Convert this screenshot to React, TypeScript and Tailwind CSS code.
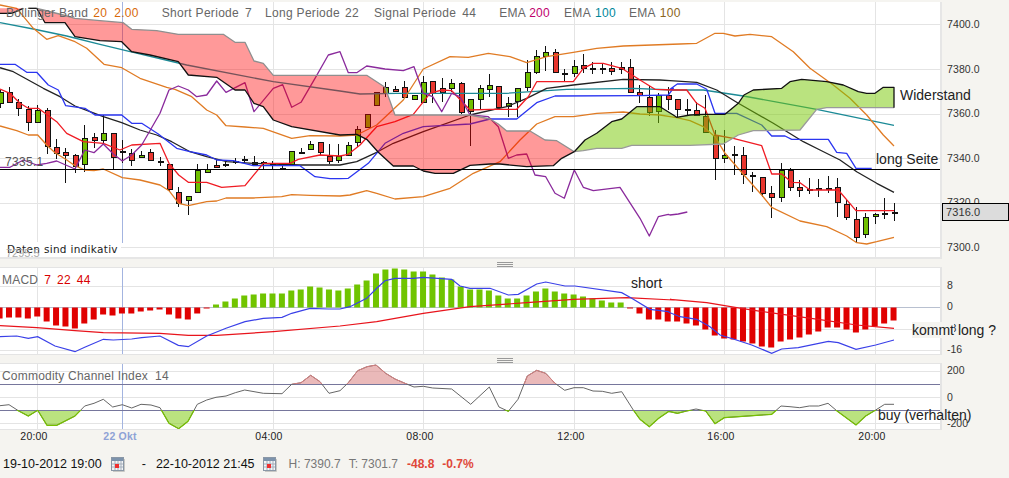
import React from 'react';

// candles: high, body top, body bottom, low, colour (g/r). first one is cut off at the left edge
const candles: [number, number, number, number, string][] = [
  [90, 92, 103, 108, 'g'], [87, 92, 102, 102, 'r'], [99, 102, 108, 116, 'r'], [106, 109, 122, 131, 'r'],
  [105, 110, 122, 122, 'g'], [108, 110, 146, 154, 'r'], [139, 147, 153, 159, 'r'], [148, 152, 155, 183, 'r'],
  [154, 155, 166, 173, 'r'], [125, 138, 164, 172, 'g'], [133, 137, 140, 148, 'r'], [115, 133, 140, 145, 'g'],
  [133, 133, 157, 169, 'r'], [140, 151, 152, 163, 'r'], [149, 153, 160, 166, 'r'], [151, 155, 157, 157, 'g'],
  [149, 152, 160, 160, 'r'], [157, 161, 162, 166, 'r'], [164, 164, 189, 192, 'r'], [187, 192, 203, 207, 'r'],
  [196, 196, 200, 215, 'g'], [164, 170, 192, 192, 'g'], [164, 169, 172, 172, 'g'], [159, 165, 167, 167, 'r'],
  [160, 164, 165, 167, 'r'], [158, 161, 162, 164, 'r'], [156, 159, 159, 163, 'r'], [156, 162, 164, 165, 'r'],
  [161, 162, 163, 170, 'r'], [161, 164, 165, 169, 'r'], [163, 168, 169, 169, 'r'], [151, 151, 165, 165, 'g'],
  [148, 152, 153, 153, 'r'], [141, 144, 149, 149, 'g'], [142, 142, 152, 155, 'r'], [144, 156, 161, 164, 'r'],
  [144, 156, 160, 163, 'g'], [142, 145, 155, 155, 'g'], [126, 129, 142, 147, 'g'], [114, 114, 127, 127, 'g'],
  [92, 92, 105, 105, 'g'], [82, 87, 93, 97, 'g'], [86, 89, 91, 91, 'r'], [81, 87, 97, 97, 'r'],
  [95, 95, 99, 99, 'g'], [76, 82, 102, 103, 'g'], [81, 81, 93, 103, 'r'], [78, 88, 92, 102, 'r'],
  [79, 83, 88, 92, 'g'], [82, 83, 112, 114, 'r'], [99, 99, 111, 146, 'g'], [85, 88, 99, 110, 'g'],
  [74, 85, 89, 97, 'g'], [86, 86, 107, 107, 'r'], [97, 103, 106, 117, 'g'], [88, 88, 101, 117, 'g'],
  [60, 72, 87, 91, 'g'], [50, 56, 72, 74, 'g'], [46, 52, 56, 71, 'g'], [49, 52, 72, 72, 'r'],
  [69, 73, 73, 82, 'r'], [60, 66, 73, 77, 'g'], [54, 65, 68, 73, 'r'], [62, 68, 69, 74, 'r'],
  [63, 68, 69, 74, 'r'], [62, 68, 71, 75, 'r'], [62, 67, 69, 74, 'r'], [59, 67, 92, 92, 'r'],
  [85, 92, 95, 103, 'r'], [86, 97, 112, 116, 'r'], [93, 95, 111, 123, 'g'], [87, 95, 99, 110, 'r'],
  [99, 99, 109, 118, 'r'], [99, 109, 110, 115, 'r'], [102, 110, 115, 115, 'r'], [95, 116, 132, 132, 'r'],
  [130, 135, 158, 180, 'r'], [130, 155, 158, 163, 'g'], [146, 154, 154, 175, 'r'], [147, 155, 174, 184, 'r'],
  [172, 175, 176, 192, 'r'], [177, 177, 193, 197, 'r'], [186, 193, 197, 218, 'r'], [163, 170, 197, 202, 'g'],
  [168, 170, 187, 191, 'r'], [180, 187, 190, 197, 'r'], [178, 189, 190, 194, 'r'], [179, 188, 189, 197, 'r'],
  [176, 188, 189, 193, 'r'], [178, 187, 202, 217, 'r'], [200, 204, 217, 220, 'r'], [207, 219, 237, 243, 'r'],
  [213, 217, 234, 238, 'g'], [213, 214, 216, 224, 'g'], [198, 213, 214, 219, 'r'], [203, 212, 212, 221, 'r'],
];

// macd histogram, first bar is at the left edge as well
const macdBars = [
  -11, -10, -10, -11, -9, -14, -18, -19, -21, -16, -12, -7, -8, -6, -6, -4, -3, -2, -7, -11, -12, -6, -1, 3, 6, 9, 12,
  13, 14, 14, 14, 17, 18, 21, 20, 18, 17, 19, 23, 27, 34, 38, 39, 38, 36, 36, 33, 30, 28, 21, 18, 18, 17, 12, 9, 9, 12,
  16, 19, 16, 14, 13, 11, 9, 7, 5, 5, -1, -6, -12, -12, -14, -14, -16, -18, -22, -28, -31, -32, -34, -36, -39, -40,
  -34, -32, -30, -27, -24, -20, -20, -22, -25, -22, -19, -16, -13,
];

const cx = (i: number) => 9 + 9.41 * i;

// points below were read off the 3x crops, so they are kept in crop coordinates
const seg = (ox: number, oy: number, a: number[]) => {
  const out: string[] = [];
  for (let i = 0; i < a.length; i += 2) {
    out.push(`${(ox + a[i] / 3).toFixed(1)},${(oy + a[i + 1] / 3).toFixed(1)}`);
  }
  return out.join(' ');
};

const upperBand = [
  seg(0, 0, [0, 15, 50, 25, 100, 85, 140, 118, 175, 107, 225, 125, 260, 145, 312, 193, 365, 203, 420, 235, 500, 262, 525, 268, 575, 290, 620, 330, 650, 345, 678, 377, 735, 381, 790, 385, 875, 415, 930, 407, 1020, 408]),
  seg(340, 0, [50, 405, 110, 375, 190, 300, 250, 207, 330, 170, 385, 172, 445, 160, 510, 170, 560, 188, 620, 170, 700, 157, 770, 145, 850, 138, 1020, 132]),
  seg(670, 0, [80, 130, 135, 100, 160, 100, 195, 108, 240, 103, 305, 110, 370, 155, 420, 205, 490, 255, 540, 295, 590, 345, 640, 405, 672, 438]),
].join(' ');

const lowerBand = [
  seg(0, 0, [0, 378, 50, 392, 85, 405, 113, 405, 140, 435, 165, 458, 197, 478, 225, 497, 254, 510, 282, 512, 310, 507, 367, 533, 420, 540, 480, 555, 507, 572, 536, 610, 565, 617, 620, 605, 650, 603, 678, 594, 760, 594, 845, 590, 875, 584, 930, 586, 1020, 588]),
  seg(340, 0, [30, 585, 80, 572, 110, 580, 165, 597, 250, 590, 330, 565, 400, 520, 480, 485, 540, 420, 590, 372, 645, 350, 700, 350, 770, 340, 850, 336, 900, 342, 960, 345, 990, 350]),
  seg(670, 0, [20, 353, 60, 362, 100, 380, 135, 410, 165, 460, 220, 523, 275, 585, 305, 622, 390, 663, 470, 680, 530, 708, 560, 728, 590, 732, 620, 725, 672, 712]),
].join(' ');

const midBand = [
  seg(0, 0, [0, 203, 40, 215, 85, 240, 130, 265, 180, 290, 225, 318, 270, 335, 310, 350, 365, 368, 420, 390, 470, 405, 515, 425, 570, 455, 620, 470, 680, 485, 760, 490, 900, 495, 1020, 495]),
  seg(340, 0, [50, 485, 110, 457, 160, 430, 250, 395, 390, 345, 500, 320, 560, 295, 620, 265, 700, 255, 850, 238, 960, 240]),
  seg(670, 0, [0, 242, 80, 247, 140, 270, 205, 310, 310, 370, 400, 425, 450, 450, 510, 480, 560, 515, 620, 550, 672, 577]),
].join(' ');

const blueLine = [
  seg(0, 0, [0, 193, 45, 193, 80, 217, 110, 217, 145, 255, 175, 270, 197, 317, 255, 325, 285, 345, 365, 345, 395, 370, 425, 370, 475, 402, 530, 445, 570, 455, 620, 465, 650, 480, 700, 482, 760, 497, 900, 497, 945, 530, 990, 536, 1020, 536]),
  seg(340, 0, [25, 535, 85, 490, 135, 430, 190, 400, 250, 380, 390, 372, 450, 357, 530, 357, 590, 308, 645, 288, 900, 287, 985, 285, 1000, 265]),
  seg(670, 0, [0, 268, 22, 252, 80, 252, 110, 268, 135, 340, 200, 340, 275, 375, 305, 408, 345, 408, 365, 418, 475, 418, 500, 457, 530, 460, 558, 505, 605, 505]),
].join(' ');

const redLine = [
  seg(0, 0, [0, 267, 30, 280, 60, 310, 85, 325, 115, 325, 170, 365, 200, 400, 250, 425, 310, 430, 360, 450, 395, 435, 480, 430, 507, 490, 536, 525, 565, 547, 620, 547, 665, 562, 735, 557, 790, 490, 870, 490, 895, 478, 960, 465, 1020, 468]),
  seg(340, 0, [25, 463, 60, 435, 110, 380, 165, 365, 220, 343, 270, 280, 305, 270, 335, 272, 390, 330, 450, 328, 530, 328, 565, 290, 590, 245, 700, 245, 730, 205, 760, 190, 790, 190, 845, 205, 900, 240, 945, 268, 1000, 270]),
  seg(670, 0, [50, 270, 80, 310, 105, 325, 135, 405, 190, 415, 275, 437, 305, 522, 335, 522, 365, 547, 390, 548, 420, 570, 505, 570, 558, 632, 672, 632]),
].join(' ');

const purpleLine = [
  seg(0, 0, [0, 502, 30, 502, 70, 480, 110, 495, 140, 490, 170, 483, 197, 495, 225, 507, 254, 450, 282, 458, 310, 432, 340, 462, 367, 483, 395, 465, 425, 435, 480, 340, 507, 270, 535, 258, 565, 270, 590, 290, 620, 285, 650, 243, 678, 277, 735, 248, 762, 335, 820, 265, 848, 254, 875, 322, 903, 307, 945, 235, 985, 165, 1020, 155]),
  seg(340, 0, [25, 218, 50, 218, 80, 198, 135, 207, 190, 212, 222, 200, 250, 280, 278, 290, 305, 335, 335, 280, 360, 290, 390, 345, 445, 350, 475, 380, 505, 475, 530, 465, 560, 462, 585, 525, 617, 530, 645, 580, 673, 595, 703, 510, 730, 562, 760, 572, 840, 562, 900, 655, 928, 708, 955, 650, 985, 643]),
  seg(670, 0, [0, 645, 25, 642, 52, 636]),
].join(' ');

const tealLine = [
  seg(0, 0, [0, 68, 100, 87, 200, 108, 300, 133, 400, 157, 560, 195, 820, 245, 1020, 273]),
  seg(340, 0, [60, 282, 170, 280, 500, 280, 680, 268, 880, 265, 1000, 270]),
  seg(670, 0, [100, 270, 220, 288, 440, 328, 672, 376]),
].join(' ');

// ichimoku style cloud edges
const redTopA = seg(0, 0, [0, 25, 70, 25]);
const redBottomA = seg(0, 0, [70, 25, 35, 40, 0, 40]);
const redTopB = [
  seg(0, 0, [110, 25, 130, 30, 190, 45, 225, 55, 300, 62, 370, 68, 395, 88, 470, 92, 535, 103, 670, 103, 705, 127, 735, 127, 762, 183, 790, 190, 820, 226, 1020, 226]),
  seg(340, 0, [80, 226, 135, 262, 165, 345, 390, 345, 450, 357, 475, 372, 500, 393, 570, 393, 615, 420, 650, 422, 703, 455]),
].join(' ');
const redBottomB = [
  seg(0, 0, [110, 25, 135, 68, 195, 68, 225, 110, 300, 122, 365, 125, 395, 155, 450, 165, 535, 185, 565, 225, 650, 232, 705, 270, 735, 270, 762, 310, 790, 320, 820, 360, 875, 380, 1020, 405]),
  seg(340, 0, [50, 403, 80, 418, 115, 457, 160, 498, 220, 498, 250, 513, 285, 520, 340, 520, 390, 496, 450, 492, 480, 492, 560, 500, 640, 497, 665, 475, 703, 455]),
].join(' ');
const greenTop = [
  seg(340, 0, [703, 455, 735, 420, 770, 400, 815, 365, 845, 357, 890, 320, 960, 320, 1000, 345]),
  seg(670, 0, [20, 352, 60, 345, 100, 343, 165, 343, 205, 310, 222, 285, 250, 270, 335, 265, 360, 245, 395, 238, 470, 245, 520, 255, 565, 275, 590, 280, 615, 280, 640, 262, 672, 262]),
].join(' ');
const greenBottom = [
  seg(340, 0, [703, 455, 730, 452, 770, 445, 845, 445, 875, 436, 1020, 436]),
  seg(670, 0, [60, 436, 160, 432, 205, 405, 250, 392, 390, 390, 440, 328, 470, 323, 672, 323]),
].join(' ');
const reversed = (s: string) => s.split(' ').reverse().join(' ');

const macdBlue = [
  seg(0, 260, [0, 230, 50, 228, 85, 235, 113, 230, 165, 258, 225, 275, 254, 262, 310, 238, 340, 240, 395, 237, 425, 233, 480, 228, 535, 256, 565, 260, 620, 228, 678, 205, 735, 185, 790, 175, 846, 172, 875, 160, 930, 145, 985, 147, 1020, 147]),
  seg(340, 260, [30, 140, 80, 115, 110, 85, 135, 62, 165, 55, 220, 55, 250, 52, 335, 58, 360, 78, 390, 85, 450, 85, 505, 105, 535, 103, 590, 72, 617, 66, 675, 78, 705, 78, 845, 98, 875, 115, 930, 148, 985, 155]),
  seg(670, 260, [0, 158, 30, 170, 80, 178, 120, 200, 150, 225, 190, 237, 245, 255, 305, 280, 335, 267, 385, 263, 475, 244, 505, 248, 558, 268, 617, 255, 672, 240]),
].join(' ');
const macdRed = [
  seg(0, 260, [0, 197, 110, 203, 225, 212, 310, 218, 480, 220, 565, 226, 650, 226, 820, 215, 1020, 198]),
  seg(340, 260, [110, 185, 250, 160, 390, 140, 560, 128, 700, 118, 860, 113, 1000, 120]),
  seg(670, 260, [0, 118, 110, 128, 200, 143, 300, 158, 445, 178, 560, 195, 672, 205]),
].join(' ');

const cciLine = [
  seg(0, 260, [0, 437, 27, 434, 55, 452, 85, 468, 113, 451, 141, 496, 170, 496, 225, 468, 254, 438, 282, 430, 310, 418, 338, 441, 367, 434, 395, 444, 423, 433, 453, 435, 480, 443, 507, 490, 536, 506, 564, 484, 592, 433, 620, 420, 648, 412, 678, 408, 706, 398, 734, 390, 790, 400, 846, 401, 875, 373, 903, 368, 932, 346, 960, 365, 987, 400, 1020, 392]),
  seg(340, 260, [25, 368, 53, 332, 81, 320, 108, 315, 137, 340, 165, 357, 205, 374, 222, 381, 250, 379, 278, 384, 335, 387, 392, 433, 448, 381, 477, 441, 505, 454, 534, 418, 562, 348, 590, 331, 617, 340, 645, 370, 674, 391, 702, 383, 730, 383, 759, 393, 787, 394, 815, 400, 845, 395, 880, 450, 900, 478, 928, 500, 956, 475, 985, 455]),
  seg(670, 260, [0, 455, 22, 460, 50, 453, 78, 447, 107, 453, 135, 491, 163, 473, 305, 463, 333, 438, 360, 440, 389, 443, 418, 438, 446, 438, 474, 430, 500, 452, 558, 495, 587, 468, 617, 450, 644, 433, 672, 433]),
].join(' ');

const gridX = [37.5, 273.5, 423.5, 574.5, 724.5, 875.5];

const Grid = ({ rows, y1, y2, markerTo }: { rows: number[]; y1: number; y2: number; markerTo: number }) => (
  <g>
    {rows.map((y) => (
      <line key={y} x1={0} x2={940} y1={y} y2={y} stroke="#e4e4e4" strokeWidth={1} />
    ))}
    {gridX.map((x) => (
      <line key={x} x1={x} x2={x} y1={y1} y2={y2} stroke="#e4e4e4" strokeWidth={1} />
    ))}
    <line x1={122.5} x2={122.5} y1={y1} y2={markerTo} stroke="#a3b4e0" strokeWidth={1} />
  </g>
);

const Candles = () => (
  <g>
    {candles.map(([high, top, bottom, low, col], n) => {
      const rx = Math.round(cx(n - 1));
      const thin = bottom - top <= 1;
      return (
        <g key={n}>
          <line x1={rx + 0.5} x2={rx + 0.5} y1={high} y2={low} stroke="#111" strokeWidth={1} />
          {thin ? (
            <rect x={rx - 2} y={top} width={6} height={2} fill="#111" />
          ) : (
            <rect
              x={rx - 1.5}
              y={top + 0.5}
              width={5}
              height={bottom - top}
              fill={col === 'g' ? '#70bf00' : '#e8362e'}
              stroke="#111"
              strokeWidth={1}
            />
          )}
        </g>
      );
    })}
  </g>
);

const MainChart = () => (
  <svg width={940} height={255} viewBox="0 2 940 255" className="block">
    <Grid rows={[24.5, 69.5, 114.5, 158.5, 203.5, 247.5]} y1={2} y2={257} markerTo={243} />
    <Candles />
    <g fill="none" strokeLinejoin="round" strokeWidth={1.3}>
      <polyline points={tealLine} stroke="#1b8a96" />
      <polyline points={upperBand} stroke="#e07b24" />
      <polyline points={lowerBand} stroke="#e07b24" />
      <polyline points={midBand} stroke="#222" />
      <polyline points={blueLine} stroke="#2a35f0" />
      <polyline points={redLine} stroke="#f01c24" />
      <polyline points={purpleLine} stroke="#8a2a9c" />
    </g>
    {/* clouds go over the candles and lines, that is why candles turn brown below them */}
    <polygon points={`${redTopA} ${redBottomA}`} fill="#ff0000" fillOpacity={0.4} />
    <polygon points={`${redTopB} ${reversed(redBottomB)}`} fill="#ff0000" fillOpacity={0.4} />
    <polygon points={`${greenTop} ${seg(670, 0, [672, 323])} ${reversed(greenBottom)}`} fill="#76c800" fillOpacity={0.5} />
    <g fill="none" strokeLinejoin="round" strokeWidth={1.3}>
      <polyline points={redTopB} stroke="#8f8f8f" />
      <polyline points={redBottomA} stroke="#111" />
      <polyline points={seg(0, 0, [85, 25, 110, 25])} stroke="#111" />
      <polyline points={redBottomB} stroke="#111" />
      <polyline points={greenBottom} stroke="#9a9a9a" />
      <polyline points={`${greenTop} ${seg(670, 0, [672, 323])}`} stroke="#111" />
    </g>
    <line x1={0} x2={940} y1={169.5} y2={169.5} stroke="#000" strokeWidth={1} />
  </svg>
);

const MacdChart = () => (
  <svg width={940} height={86} viewBox="0 268 940 86" className="block">
    <Grid rows={[286.5, 329.5, 350.5]} y1={268} y2={354} markerTo={354} />
    <line x1={0} x2={940} y1={307.5} y2={307.5} stroke="#b8c0d0" strokeWidth={1} />
    {macdBars.map((v, n) => (
      <rect
        key={n}
        x={cx(n - 1) - 3}
        y={v > 0 ? 307.5 - v : 307.5}
        width={6}
        height={Math.abs(v)}
        fill={v > 0 ? '#70c400' : '#e00000'}
      />
    ))}
    <polyline points={macdRed} fill="none" stroke="#e8141c" strokeWidth={1.2} />
    <polyline points={macdBlue} fill="none" stroke="#3a40e8" strokeWidth={1.2} />
  </svg>
);

const CciChart = () => {
  const area = `0,384 ${cciLine} 894,384`;
  const areaLow = `0,410 ${cciLine} 894,410`;
  return (
    <svg width={940} height={65} viewBox="0 364 940 65" className="block">
      <defs>
        <clipPath id="cci-top">
          <rect x={0} y={364} width={940} height={20} />
        </clipPath>
        <clipPath id="cci-bottom">
          <rect x={0} y={410} width={940} height={19} />
        </clipPath>
      </defs>
      <Grid rows={[371.5, 397.5, 423.5]} y1={364} y2={429} markerTo={429} />
      <polygon points={area} fill="#d98080" fillOpacity={0.55} clipPath="url(#cci-top)" />
      <polygon points={areaLow} fill="#76c800" fillOpacity={0.5} clipPath="url(#cci-bottom)" />
      <line x1={0} x2={940} y1={384.5} y2={384.5} stroke="#76769c" strokeWidth={1} />
      <line x1={0} x2={940} y1={410.5} y2={410.5} stroke="#76769c" strokeWidth={1} />
      <polyline points={cciLine} fill="none" stroke="#666" strokeWidth={1} />
      <polyline points={cciLine} fill="none" stroke="#d98080" strokeWidth={1} clipPath="url(#cci-top)" />
      <polyline points={cciLine} fill="none" stroke="#76c000" strokeWidth={1.2} clipPath="url(#cci-bottom)" />
    </svg>
  );
};

const Grip = () => (
  <div className="flex h-[8px] shrink-0 items-end justify-center">
    <div className="flex w-[16px] flex-col gap-px">
      <div className="h-px bg-[#999]" />
      <div className="h-px bg-[#999]" />
      <div className="h-px bg-[#999]" />
    </div>
  </div>
);

const CalendarIcon = () => (
  <svg width={14} height={15} viewBox="0 0 14 15" className="shrink-0">
    <rect x={0.5} y={0.5} width={12} height={13} fill="#f4f6f8" stroke="#8a97a6" />
    <rect x={1} y={1} width={11} height={3} fill="#7d93ac" />
    <path d="M1 7h11M1 10h11M4 4v9M7 4v9M10 4v9" stroke="#a4aeba" strokeWidth={1} fill="none" />
    <rect x={4} y={7} width={4} height={4} fill="#f03030" />
    <path d="M13.5 2v12.5H2" stroke="#c8c8c4" fill="none" />
  </svg>
);

const Note = ({ className, children }: { className: string; children: React.ReactNode }) => (
  <span className={`absolute whitespace-nowrap text-[14px] leading-none text-[#222] ${className}`}>{children}</span>
);

const Legend = () => (
  <div className="absolute left-[6px] top-[4px] flex whitespace-nowrap text-[12px] leading-[14px] tracking-[0.3px] text-[#666]">
    <span>Bollinger Band</span>
    <span className="ml-[5px] text-[#d8690a]">20</span>
    <span className="ml-[7px] text-[#d8690a]">2.00</span>
    <span className="ml-[23px]">Short Periode</span>
    <span className="ml-[6px]">7</span>
    <span className="ml-[13px]">Long Periode</span>
    <span className="ml-[5px]">22</span>
    <span className="ml-[15px]">Signal Periode</span>
    <span className="ml-[6px]">44</span>
    <span className="ml-[23px]">EMA</span>
    <span className="ml-[3px] text-[#c0006c]">200</span>
    <span className="ml-[14px]">EMA</span>
    <span className="ml-[4px] text-[#00879a]">100</span>
    <span className="ml-[13px]">EMA</span>
    <span className="ml-[4px] text-[#8a6420]">100</span>
  </div>
);

export default function App() {
  return (
    <div className="flex h-[478px] w-[1009px] flex-col overflow-hidden bg-[#f5f4f0] font-['Liberation_Sans',Arial,sans-serif]">
      {/* main chart */}
      <div className="relative mt-[2px] flex h-[257px] shrink-0">
        <div className="relative w-[942px] shrink-0 overflow-hidden border-b-2 border-r-2 border-[#e6e6e6] bg-white">
          <MainChart />
          <Legend />
          <span className="absolute left-[5px] top-[154px] text-[12px] leading-none tracking-[0.3px] text-[#555]">7335.1</span>
          <span className="absolute left-0 top-[240px] bg-white py-px pl-[7px] pr-[3px] font-['DejaVu_Sans',sans-serif] text-[10.5px] leading-[12px] tracking-[0.3px] text-[#222]">
            Daten sind indikativ
          </span>
          <span className="absolute left-[6px] top-[246px] text-[11px] leading-none text-[#aaa]">7295.5</span>
        </div>
        <div className="relative flex flex-1 flex-col justify-between pb-[6px] pl-[5px] pt-[16px] text-[10.5px] leading-[12px] tracking-[0.1px] text-[#333]">
          <span>7400.0</span>
          <span>7380.0</span>
          <span>7360.0</span>
          <span>7340.0</span>
          <span>7320.0</span>
          <span>7300.0</span>
          <div className="absolute left-0 top-[201px] flex h-[18px] w-[67px] items-center border border-black bg-[#dcdcdc] pl-[3px] text-[11px]">
            7316.0
          </div>
        </div>
        <Note className="left-[900px] top-[86px]">Widerstand</Note>
        <Note className="left-[876px] top-[150px]">long Seite</Note>
      </div>

      <Grip />

      {/* macd */}
      <div className="relative flex h-[88px] shrink-0">
        <div className="relative w-[942px] shrink-0 overflow-hidden border-y border-r-2 border-[#e4e4e4] bg-white">
          <MacdChart />
          <div className="absolute left-[2px] top-[5px] flex gap-[6px] whitespace-nowrap text-[12px] leading-[14px] tracking-[0.2px] text-[#666]">
            <span>MACD</span>
            <span className="text-[#d80000]">7</span>
            <span className="text-[#d80000]">22</span>
            <span className="text-[#d80000]">44</span>
          </div>
        </div>
        <div className="flex flex-1 flex-col justify-between pb-0 pl-[5px] pt-[12px] text-[10.5px] leading-[12px] text-[#333]">
          <span>8</span>
          <span>0</span>
          <span>-8</span>
          <span>-16</span>
        </div>
        <Note className="left-[631px] top-[9px]">short</Note>
        {/* the word covers the axis label, only a sliver of the 8 stays visible */}
        <Note className="left-[912px] top-[56px]">
          <span className="bg-[#f5f4f0]">kommt</span> long ?
        </Note>
      </div>

      <Grip />

      {/* cci */}
      <div className="relative flex h-[67px] shrink-0">
        <div className="relative w-[942px] shrink-0 overflow-hidden border-y border-r-2 border-[#e4e4e4] bg-white">
          <CciChart />
          <div className="absolute left-[2px] top-[5px] flex gap-[7px] whitespace-nowrap text-[12px] leading-[14px] tracking-[0.2px] text-[#666]">
            <span>Commodity Channel Index</span>
            <span>14</span>
          </div>
        </div>
        <div className="flex flex-1 flex-col justify-between py-px pl-[5px] text-[10.5px] leading-[12px] text-[#333]">
          <span>200</span>
          <span>0</span>
          <span>-200</span>
        </div>
        <Note className="left-[878px] top-[45px]">buy (verhalten)</Note>
      </div>

      {/* time axis */}
      <svg width={941} height={14} viewBox="0 430 941 14" className="block shrink-0">
        <g fontSize={10.5} fill="#222" textAnchor="middle" letterSpacing={0.2}>
          <text x={34} y={440}>20:00</text>
          <text x={120} y={440} fill="#8ea2d6" fontWeight={700}>22 Okt</text>
          <text x={269} y={440}>04:00</text>
          <text x={420} y={440}>08:00</text>
          <text x={571} y={440}>12:00</text>
          <text x={721} y={440}>16:00</text>
          <text x={872} y={440}>20:00</text>
        </g>
      </svg>

      {/* period and quote */}
      <div className="mt-[13px] flex items-center whitespace-nowrap pl-[3px] text-[12.5px] leading-[15px] text-[#111]">
        <span>19-10-2012 19:00</span>
        <span className="ml-[9px]"><CalendarIcon /></span>
        <span className="ml-[17px]">-</span>
        <span className="ml-[10px]">22-10-2012 21:45</span>
        <span className="ml-[8px]"><CalendarIcon /></span>
        <span className="ml-[12px] text-[12px] text-[#777]">H: 7390.7</span>
        <span className="ml-[8px] text-[12px] text-[#777]">T: 7301.7</span>
        <span className="ml-[9px] text-[12px] font-bold text-[#e0483a]">-48.8</span>
        <span className="ml-[8px] text-[12px] font-bold text-[#e0483a]">-0.7%</span>
      </div>
    </div>
  );
}
